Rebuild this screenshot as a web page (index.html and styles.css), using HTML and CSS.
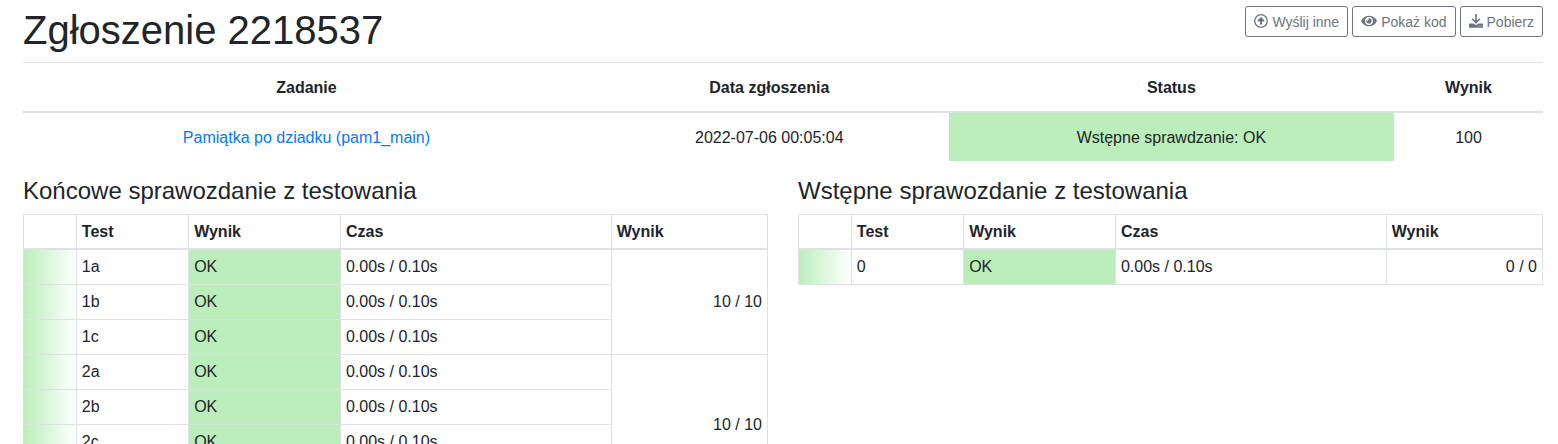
FILE: index.html
```html
<!DOCTYPE html>
<html lang="pl">
<head>
  <meta charset="utf-8">
  <meta name="viewport" content="width=device-width, initial-scale=1">
  <title>Zgłoszenie 2218537</title>
  <link rel="stylesheet" href="styles.css">
</head>
<body>
  <main class="page">
    <header class="page-header">
      <h1 class="page-title">Zgłoszenie 2218537</h1>
      <div class="actions">
        <button type="button" class="btn">
          <svg class="icon" width="14" height="14" viewBox="0 0 14 14" aria-hidden="true"><circle cx="7" cy="7" r="6.3" fill="none" stroke="currentColor" stroke-width="1.3"/><path d="M7 3 10.3 6.2V7.4H8V10.4H6V7.4H3.7V6.2Z" fill="currentColor"/></svg>
          Wyślij inne
        </button>
        <button type="button" class="btn">
          <svg class="icon" width="16" height="14" viewBox="0 0 576 512" aria-hidden="true"><path fill="currentColor" d="M572.52 241.4C518.29 135.59 410.93 64 288 64S57.68 135.64 3.48 241.41a32.35 32.35 0 0 0 0 29.19C57.71 376.41 165.07 448 288 448s230.32-71.64 284.52-177.41a32.35 32.35 0 0 0 0-29.19zM288 400a144 144 0 1 1 144-144 143.93 143.93 0 0 1-144 144zm0-240a95.31 95.31 0 0 0-25.31 3.79 47.85 47.85 0 0 1-66.9 66.9A95.78 95.78 0 1 0 288 160z"/></svg>
          Pokaż kod
        </button>
        <button type="button" class="btn">
          <svg class="icon" width="14" height="14" viewBox="0 0 14 14" aria-hidden="true"><path d="M7 0V8.4M3.2 4.8 7 8.6 10.8 4.8" fill="none" stroke="currentColor" stroke-width="1.6"/><path fill="currentColor" fill-rule="evenodd" d="M.6 9.6H4.2L7 11 9.8 9.6H13.4Q14 9.6 14 10.2V13.2Q14 13.8 13.4 13.8H.6Q0 13.8 0 13.2V10.2Q0 9.6.6 9.6ZM9.4 11.7V12.6H10.3V11.7ZM11.5 11.7V12.6H12.4V11.7Z"/></svg>
          Pobierz
        </button>
      </div>
    </header>

    <table class="summary">
      <colgroup><col class="col-task"><col class="col-date"><col class="col-status"><col class="col-score"></colgroup>
      <thead>
        <tr><th scope="col">Zadanie</th><th scope="col">Data zgłoszenia</th><th scope="col">Status</th><th scope="col">Wynik</th></tr>
      </thead>
      <tbody>
        <tr><td><a href="#">Pamiątka po dziadku (pam1_main)</a></td><td>2022-07-06 00:05:04</td><td class="ok">Wstępne sprawdzanie: OK</td><td>100</td></tr>
      </tbody>
    </table>

    <div class="reports">
      <section>
        <h4 class="report-title">Końcowe sprawozdanie z testowania</h4>
        <table class="report">
          <colgroup><col class="col-mark"><col class="col-test"><col class="col-result"><col class="col-time"><col></colgroup>
          <thead>
            <tr><th></th><th scope="col">Test</th><th scope="col">Wynik</th><th scope="col">Czas</th><th scope="col">Wynik</th></tr>
          </thead>
          <tbody>
            <tr><td class="mark"></td><td>1a</td><td class="ok">OK</td><td>0.00s / 0.10s</td><td class="points" rowspan="3">10 / 10</td></tr>
            <tr><td class="mark"></td><td>1b</td><td class="ok">OK</td><td>0.00s / 0.10s</td></tr>
            <tr><td class="mark"></td><td>1c</td><td class="ok">OK</td><td>0.00s / 0.10s</td></tr>
            <tr><td class="mark"></td><td>2a</td><td class="ok">OK</td><td>0.00s / 0.10s</td><td class="points" rowspan="4">10 / 10</td></tr>
            <tr><td class="mark"></td><td>2b</td><td class="ok">OK</td><td>0.00s / 0.10s</td></tr>
            <tr><td class="mark"></td><td>2c</td><td class="ok">OK</td><td>0.00s / 0.10s</td></tr>
            <tr><td class="mark"></td><td>2d</td><td class="ok">OK</td><td>0.00s / 0.10s</td></tr>
          </tbody>
        </table>
      </section>
      <section>
        <h4 class="report-title">Wstępne sprawozdanie z testowania</h4>
        <table class="report">
          <colgroup><col class="col-mark"><col class="col-test"><col class="col-result"><col class="col-time"><col></colgroup>
          <thead>
            <tr><th></th><th scope="col">Test</th><th scope="col">Wynik</th><th scope="col">Czas</th><th scope="col">Wynik</th></tr>
          </thead>
          <tbody>
            <tr><td class="mark"></td><td>0</td><td class="ok">OK</td><td>0.00s / 0.10s</td><td class="points">0 / 0</td></tr>
          </tbody>
        </table>
      </section>
    </div>
  </main>
</body>
</html>
```

FILE: styles.css
```css
*, *::before, *::after { box-sizing: border-box; }

body {
  margin: 0;
  background: #fff;
  color: #212529;
  font-family: "Liberation Sans", Arial, sans-serif;
  font-size: 16px;
  line-height: 24px;
}

.page { padding: 6px 15px 16px 23px; }

.page-header {
  display: flex;
  justify-content: space-between;
  align-items: flex-start;
  margin-bottom: 8px;
}

.page-title {
  margin: 0;
  font-size: 40px;
  font-weight: 500;
  line-height: 48px;
}

.actions { display: flex; gap: 4px; }

.btn {
  display: inline-flex;
  align-items: center;
  gap: 4px;
  padding: 5px 8px 3px;
  border: 1px solid #6c757d;
  border-radius: 3px;
  background: transparent;
  color: #6c757d;
  font-family: inherit;
  font-size: 14px;
  line-height: 21px;
  cursor: pointer;
}

.icon { display: block; flex: none; margin-bottom: 4px; }

a { color: #007bff; text-decoration: none; }

table {
  width: 100%;
  border-collapse: collapse;
  table-layout: fixed;
}

.summary { margin-bottom: 16px; text-align: center; }
.summary th, .summary td {
  padding: 13px 12px 11px;
  border-top: 1px solid #dee2e6;
}
.summary thead th { border-bottom: 2px solid #dee2e6; }

.col-task { width: 37.3%; }
.col-date { width: 23.6%; }
.col-status { width: 29.3%; }

.ok { background: #bbeebb; }

.reports {
  display: grid;
  grid-template-columns: 1fr 1fr;
  gap: 30px;
}

.report-title {
  margin: 0 0 9px;
  font-size: 24px;
  font-weight: 500;
  line-height: 28px;
}

.report th, .report td {
  padding: 5px;
  border: 1px solid #dee2e6;
  text-align: left;
  vertical-align: middle;
}
.report thead th {
  padding-bottom: 4px;
  border-bottom-width: 2px;
}
.report tbody td { padding-bottom: 5px; }
.report .points { text-align: right; }

.col-mark { width: 7.1%; }
.col-test { width: 15.1%; }
.col-result { width: 20.4%; }
.col-time { width: 36.4%; }

.report .mark { background: linear-gradient(to right, #bbeebb, #fff) no-repeat border-box; }
```
